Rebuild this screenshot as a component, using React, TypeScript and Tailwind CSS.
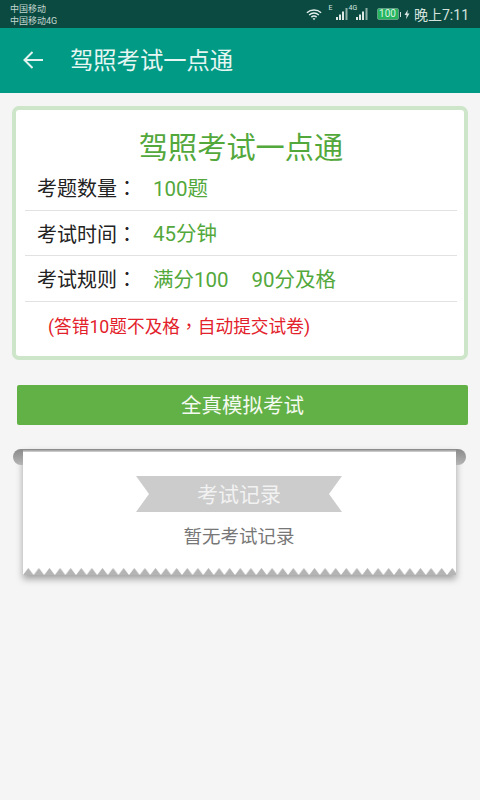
import React from "react";

const font = { fontFamily: 'Roboto, "Noto Sans CJK SC", sans-serif' };
const tcPunct = "font-['Noto_Sans_CJK_TC']";

function Signal({ label }: { label: string }) {
  return (
    <div className="relative h-[14px] w-[21px]">
      <span className="absolute left-0 top-[-3px] text-[7px] leading-[8px] text-[#d5e5e0]">{label}</span>
      <svg width="21" height="14" viewBox="0 0 21 14" className="absolute left-0 top-0">
        <rect x="7" y="10" width="2" height="3" fill="#dce8e4" />
        <rect x="10" y="7.5" width="2" height="5.5" fill="#dce8e4" />
        <rect x="13" y="4.5" width="2" height="8.5" fill="#dce8e4" />
        <rect x="16.5" y="1" width="2" height="12" fill="#8fb0a7" />
      </svg>
    </div>
  );
}

function Row({ label, value, extra }: { label: string; value: string; extra?: string }) {
  return (
    <div className="flex h-[45.5px] items-center border-b border-[#e2e2e2] pl-[12px] pt-[3px] text-[20px] leading-none">
      <span className="w-[116px] whitespace-pre text-[#222222]">
        {label}
        <span className={tcPunct}>：</span>
      </span>
      <span className="text-[20.5px] text-[#53a83c]">{value}</span>
      {extra ? <span className="ml-[23px] text-[20.5px] text-[#53a83c]">{extra}</span> : null}
    </div>
  );
}

export default function App() {
  return (
    <div className="flex h-[800px] w-[480px] flex-col overflow-hidden bg-[#f5f5f5]" style={font}>
      <div className="flex h-[28px] items-center justify-between bg-[#0a4a40] pl-[10px] pr-[11px]">
        <div className="flex flex-col pt-[2px] text-[9px] leading-[12.5px] text-[#c4d8d2]">
          <span>中国移动</span>
          <span>中国移动4G</span>
        </div>
        <div className="flex items-center">
          <svg width="16" height="13" viewBox="0 0 18 14" fill="none" stroke="#e4eeeb" strokeWidth="1.6">
            <path d="M1 5 C5.5 1 12.5 1 17 5" />
            <path d="M3.5 7.6 C6.8 4.8 11.2 4.8 14.5 7.6" />
            <path d="M6 10 C8 8.4 10 8.4 12 10" />
            <path d="M9 13.5 L7.4 11.6 C8.4 11 9.6 11 10.6 11.6 Z" fill="#e4eeeb" stroke="none" />
          </svg>
          <div className="ml-[7px]"><Signal label="E" /></div>
          <div className="ml-[-1px]"><Signal label="4G" /></div>
          <div className="ml-[7px] flex h-[12px] w-[22px] items-center justify-center rounded-[2px] border border-[#5f9f84] bg-[#27b45f] text-[10px] leading-none text-[#d9f5e3]">100</div>
          <div className="ml-[1px] h-[5px] w-[1.5px] bg-[#cfe0db]" />
          <svg width="6" height="11" viewBox="0 0 7 11" className="ml-[3px]">
            <path d="M4.4 0 L0.6 6 H3 L2.4 11 L6.4 4.4 H3.9 Z" fill="#dbe7e3" />
          </svg>
          <span className="ml-[4px] pt-[1px] text-[14px] leading-none text-[#d4e2de]">晚上7:11</span>
        </div>
      </div>

      <div className="flex h-[65px] items-center bg-[#009a85] pl-[23px]">
        <svg width="20" height="18" viewBox="0 0 20 18" fill="none" stroke="#e3f4f0" strokeWidth="2" className="mb-[2px]">
          <path d="M20 9 H1.5" />
          <path d="M9.5 1 L1.5 9 L9.5 17" />
        </svg>
        <span className="ml-[27px] pt-[2px] text-[23.3px] leading-none text-[#e6f6f2]">驾照考试一点通</span>
      </div>

      <div className="mx-[12px] mt-[13px] h-[254px] rounded-[7px] border-[4px] border-[#cde5c9] bg-white pl-[9px] pr-[7px]">
        <div className="pt-[23px] text-center text-[29.2px] leading-[30px] text-[#53a83c]">驾照考试一点通</div>
        <div className="mt-[2px]">
          <Row label="考题数量" value="100题" />
          <Row label="考试时间" value="45分钟" />
          <Row label="考试规则" value="满分100" extra="90分及格" />
        </div>
        <div className="pl-[23px] pt-[12px] text-[17.7px] leading-[22px] whitespace-nowrap text-[#e3212b]">
          (答错10题不及格<span className={tcPunct}>，</span>自动提交试卷)
        </div>
      </div>

      <div className="ml-[17px] mr-[12px] mt-[25px] flex h-[40px] items-center justify-center rounded-[2px] bg-[#62b146] pt-[2px] text-[20.5px] leading-none text-[#f4faf1]">
        全真模拟考试
      </div>

      <div className="relative ml-[23px] mr-[24px] mt-[24px] h-[126px] bg-white shadow-[0_4px_7px_rgba(0,0,0,0.35)]">
        <div className="absolute left-0 right-0 top-0 h-[3px] bg-gradient-to-b from-[#7f7f7f] to-[#d8d8d8]" />
        <div className="absolute left-[-10px] top-0 h-[16px] w-[10px] rounded-l-[8px] bg-gradient-to-b from-[#8a8a8a] to-[#b5b5b5]" />
        <div className="absolute right-[-10px] top-0 h-[16px] w-[10px] rounded-r-[8px] bg-gradient-to-b from-[#8a8a8a] to-[#b5b5b5]" />

        <div className="relative ml-[113px] mt-[27px] flex h-[36px] w-[206px] items-center justify-center pt-[2px]">
          <svg width="206" height="36" viewBox="0 0 206 36" className="absolute inset-0">
            <path d="M0 0 H206 L193 18 L206 36 H0 L13 18 Z" fill="#cccccc" />
          </svg>
          <span className="relative text-[21px] leading-none text-[#f2f2f2]">考试记录</span>
        </div>
        <div className="mt-[14px] pr-[1px] text-center text-[18.5px] leading-[22px] text-[#777777]">暂无考试记录</div>

        <svg width="433" height="7" viewBox="0 0 433 7" className="absolute bottom-0 left-0">
          <defs>
            <pattern id="zig" width="10.6" height="7" patternUnits="userSpaceOnUse">
              <path d="M0 7 L5.3 0 L10.6 7 Z" fill="#b4b4b4" />
            </pattern>
          </defs>
          <rect width="433" height="7" fill="url(#zig)" />
        </svg>
      </div>
    </div>
  );
}
